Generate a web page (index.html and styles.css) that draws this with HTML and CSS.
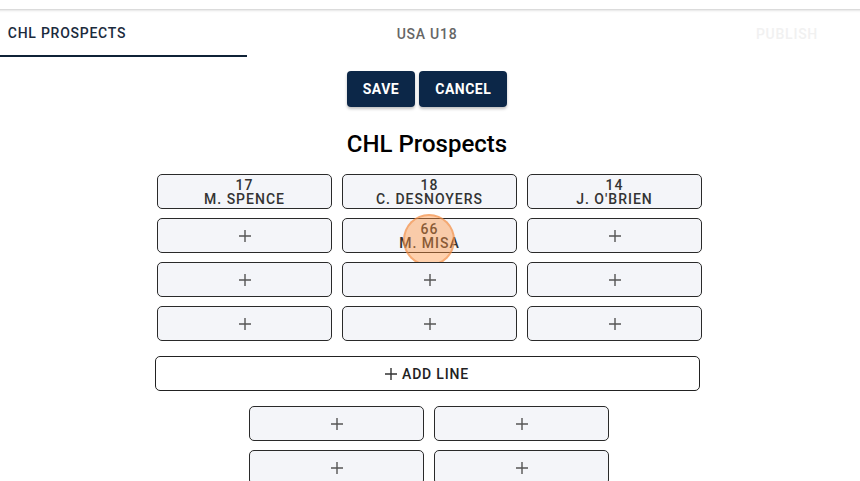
FILE: index.html
```html
<!DOCTYPE html>
<html>
<head>
<meta charset="utf-8">
<link rel="stylesheet" href="styles.css">
</head>
<body>
<div class="page">
  <div class="topbar"></div>
  <div class="tabs">
    <div class="tab active">CHL PROSPECTS</div>
    <div class="tab">USA U18</div>
    <div class="tab disabled">PUBLISH</div>
  </div>
  <div class="content">
    <div class="actions">
      <button class="btn">SAVE</button>
      <button class="btn">CANCEL</button>
    </div>
    <h1 class="title">CHL Prospects</h1>
    <div class="grid three">
      <div class="cell"><span>17</span><span>M. SPENCE</span></div>
      <div class="cell"><span>18</span><span>C. DESNOYERS</span></div>
      <div class="cell"><span>14</span><span>J. O'BRIEN</span></div>
      <div class="cell"><svg class="plus" viewBox="0 0 12 12"><path d="M6 0V12M0 6H12"/></svg></div>
      <div class="cell"><span>66</span><span>M. MISA</span><div class="touch"></div></div>
      <div class="cell"><svg class="plus" viewBox="0 0 12 12"><path d="M6 0V12M0 6H12"/></svg></div>
      <div class="cell"><svg class="plus" viewBox="0 0 12 12"><path d="M6 0V12M0 6H12"/></svg></div>
      <div class="cell"><svg class="plus" viewBox="0 0 12 12"><path d="M6 0V12M0 6H12"/></svg></div>
      <div class="cell"><svg class="plus" viewBox="0 0 12 12"><path d="M6 0V12M0 6H12"/></svg></div>
      <div class="cell"><svg class="plus" viewBox="0 0 12 12"><path d="M6 0V12M0 6H12"/></svg></div>
      <div class="cell"><svg class="plus" viewBox="0 0 12 12"><path d="M6 0V12M0 6H12"/></svg></div>
      <div class="cell"><svg class="plus" viewBox="0 0 12 12"><path d="M6 0V12M0 6H12"/></svg></div>
    </div>
    <button class="addline"><svg class="plus dark" viewBox="0 0 12 12"><path d="M6 0V12M0 6H12"/></svg><span>ADD LINE</span></button>
    <div class="grid two">
      <div class="cell"><svg class="plus" viewBox="0 0 12 12"><path d="M6 0V12M0 6H12"/></svg></div>
      <div class="cell"><svg class="plus" viewBox="0 0 12 12"><path d="M6 0V12M0 6H12"/></svg></div>
      <div class="cell"><svg class="plus" viewBox="0 0 12 12"><path d="M6 0V12M0 6H12"/></svg></div>
      <div class="cell"><svg class="plus" viewBox="0 0 12 12"><path d="M6 0V12M0 6H12"/></svg></div>
    </div>
  </div>
</div>
</body>
</html>
```

FILE: styles.css
```css
html, body {
  margin: 0;
  padding: 0;
  background: #ffffff;
  overflow: hidden;
  width: 860px;
  height: 481px;
}
body {
  font-family: Roboto, "Liberation Sans", sans-serif;
}
.page {
  width: 1080px;
  margin-left: -113px;
}
.topbar {
  height: 9px;
  background: #ffffff;
  box-shadow: 0 1px 3px rgba(0, 0, 0, 0.22);
  position: relative;
  z-index: 1;
}
.tabs {
  display: flex;
  height: 48px;
}
.tab {
  width: 360px;
  display: flex;
  align-items: center;
  justify-content: center;
  font-size: 14px;
  font-weight: 500;
  letter-spacing: 0.75px;
  color: #666666;
  box-sizing: border-box;
  padding-top: 1px;
}
.tab.active {
  color: #1b2b3d;
  border-bottom: 2px solid #0f2236;
}
.tab.disabled {
  color: #f1f1f1;
}
.content {
  display: flex;
  flex-direction: column;
  align-items: center;
}
.actions {
  display: flex;
  gap: 4px;
  margin-top: 14px;
}
.btn {
  height: 36px;
  padding: 0 16px;
  border: none;
  border-radius: 4px;
  background: #0c2748;
  color: #ffffff;
  font-family: Roboto, "Liberation Sans", sans-serif;
  font-size: 14px;
  font-weight: 700;
  letter-spacing: 0.5px;
  box-shadow: 0 2px 3px rgba(0, 0, 0, 0.25);
}
.title {
  margin: 21px 0 0;
  font-size: 24px;
  line-height: 32px;
  font-weight: 500;
  color: #000000;
}
.grid {
  display: grid;
  grid-template-columns: repeat(3, 175px);
  grid-auto-rows: 35px;
  column-gap: 10px;
  row-gap: 9px;
  margin-left: 5px;
}
.grid.three {
  margin-top: 14px;
}
.grid.two {
  grid-template-columns: repeat(2, 175px);
  margin-top: 15px;
  margin-left: 4px;
}
.cell {
  position: relative;
  box-sizing: border-box;
  border: 1px solid #2a2a2a;
  border-radius: 5px;
  background: #f4f5f9;
  display: flex;
  flex-direction: column;
  align-items: center;
  justify-content: center;
  font-size: 14px;
  line-height: 14px;
  font-weight: 500;
  letter-spacing: 1px;
  color: #333333;
}
.cell span {
  display: block;
  height: 14px;
  line-height: 14px;
}
.plus {
  width: 12px;
  height: 12px;
  stroke: #555555;
  stroke-width: 1.4;
  fill: none;
}
.plus.dark {
  stroke: #333333;
}
.touch {
  position: absolute;
  width: 48px;
  height: 48px;
  left: calc(50% - 27px);
  top: calc(50% - 22px);
  border-radius: 50%;
  background: rgba(255, 145, 60, 0.42);
  border: 2px solid rgba(240, 140, 70, 0.55);
}
.addline {
  margin-top: 15px;
  width: 545px;
  height: 35px;
  box-sizing: border-box;
  background: #ffffff;
  border: 1px solid #222222;
  border-radius: 5px;
  display: flex;
  align-items: center;
  justify-content: center;
  gap: 5px;
  font-family: Roboto, "Liberation Sans", sans-serif;
  font-size: 14px;
  font-weight: 500;
  letter-spacing: 0.8px;
  color: #222222;
  padding: 0;
  padding-top: 1px;
}
```
